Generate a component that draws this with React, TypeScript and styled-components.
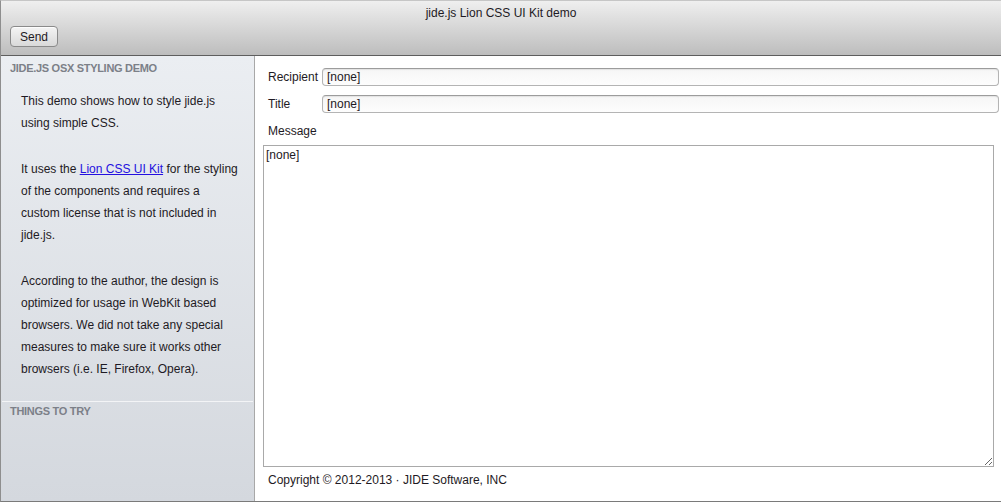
import React from "react";
import styled, { createGlobalStyle } from "styled-components";

const Global = createGlobalStyle`
  html, body { margin: 0; padding: 0; background: #fff; }
  body { font-family: "Liberation Sans", Arial, sans-serif; font-size: 12px; color: #1e1a24; }
  * { box-sizing: border-box; }
`;

const Frame = styled.div`
  width: 1001px;
  height: 502px;
  display: flex;
  flex-direction: column;
  border-top: 1px solid #c6c6c6;
  border-left: 1px solid #8e8e8e;
  border-bottom: 1px solid #7a7a7a;
  overflow: hidden;
`;

const Header = styled.header`
  height: 55px;
  flex: none;
  padding: 5px 9px 0;
  background: linear-gradient(#efefef, #bdbdbd);
  border-bottom: 1px solid #5e5e5e;
  display: flex;
  flex-direction: column;
  align-items: flex-start;
`;

const Title = styled.div`
  align-self: stretch;
  text-align: center;
  line-height: 14px;
  color: #1e1a24;
`;

const Button = styled.button`
  margin-top: 6px;
  width: 48px;
  height: 21px;
  padding: 0;
  border: 1px solid #8a8a8a;
  border-radius: 4px;
  background: linear-gradient(#f4f4f4, #d9d9d9);
  box-shadow: inset 0 1px 0 rgba(255, 255, 255, 0.8);
  font: 12px "Liberation Sans", Arial, sans-serif;
  color: #1e1a24;
`;

const Body = styled.div`
  flex: 1;
  display: flex;
  min-height: 0;
`;

const Sidebar = styled.aside`
  width: 254px;
  flex: none;
  background: linear-gradient(#ebeef2, #d4d8de);
  border-right: 1px solid #a8a8a8;
  display: flex;
  flex-direction: column;
`;

const SectionTitle = styled.div<{ $top: number; $left: number }>`
  padding: ${(p) => p.$top}px 8px 0 ${(p) => p.$left}px;
  font-size: 11px;
  font-weight: bold;
  letter-spacing: -0.3px;
  line-height: 14px;
  color: #7c8088;
`;

const SideContent = styled.div`
  padding: 15px 13px 21px 20px;
`;

const Para = styled.p`
  margin: 0;
  line-height: 22px;
  color: #1e1a24;
  & + & { margin-top: 24px; }
`;

const Link = styled.a`
  color: #2410e0;
  text-decoration: underline;
`;

const Section = styled.div`
  margin: 0 1px;
  border-top: 1px solid #f3f4f6;
`;

const Main = styled.main`
  flex: 1;
  background: #fff;
  padding: 12px 2px 0 0;
  display: flex;
  flex-direction: column;
`;

const FieldRow = styled.div`
  display: grid;
  grid-template-columns: 67px 1fr;
  align-items: center;
  height: 18px;
  & + & { margin-top: 9px; }
`;

const Label = styled.label`
  padding-left: 13px;
  line-height: 14px;
  white-space: nowrap;
  color: #1e1a24;
`;

const Input = styled.input`
  height: 18px;
  width: 100%;
  padding: 0 4px;
  border: 1px solid #b4b4b4;
  border-top-color: #9c9c9c;
  border-radius: 4px;
  background: linear-gradient(#f6f6f6, #fdfdfd);
  box-shadow: inset 0 1px 1px rgba(0, 0, 0, 0.08);
  font: 12px "Liberation Sans", Arial, sans-serif;
  color: #1e1a24;
  outline: none;
`;

const MessageLabel = styled(Label)`
  display: block;
  margin-top: 11px;
`;

const TextArea = styled.textarea`
  margin: 7px 0 0 8px;
  width: 731px;
  height: 322px;
  padding: 2px 2px;
  border: 1px solid #a9a9a9;
  border-radius: 0;
  font: 12px "Liberation Sans", Arial, sans-serif;
  line-height: 14px;
  color: #1e1a24;
  resize: both;
  outline: none;
`;

const Footer = styled.div`
  margin-top: 6px;
  padding-left: 13px;
  line-height: 14px;
  color: #1e1a24;
`;

export default function App() {
  return (
    <>
      <Global />
      <Frame>
        <Header>
          <Title>jide.js Lion CSS UI Kit demo</Title>
          <Button>Send</Button>
        </Header>
        <Body>
          <Sidebar>
            <SectionTitle $top={5} $left={9}>JIDE.JS OSX STYLING DEMO</SectionTitle>
            <SideContent>
              <Para>This demo shows how to style jide.js using simple CSS.</Para>
              <Para>
                It uses the <Link href="#">Lion CSS UI Kit</Link> for the styling of the
                components and requires a custom license that is not included in jide.js.
              </Para>
              <Para>
                According to the author, the design is optimized for usage in WebKit based
                browsers. We did not take any special measures to make sure it works other
                browsers (i.e. IE, Firefox, Opera).
              </Para>
            </SideContent>
            <Section>
              <SectionTitle $top={2} $left={8}>THINGS TO TRY</SectionTitle>
            </Section>
          </Sidebar>
          <Main>
            <FieldRow>
              <Label>Recipient</Label>
              <Input defaultValue="[none]" />
            </FieldRow>
            <FieldRow>
              <Label>Title</Label>
              <Input defaultValue="[none]" />
            </FieldRow>
            <MessageLabel>Message</MessageLabel>
            <TextArea defaultValue="[none]" />
            <Footer>Copyright © 2012-2013 · JIDE Software, INC</Footer>
          </Main>
        </Body>
      </Frame>
    </>
  );
}
